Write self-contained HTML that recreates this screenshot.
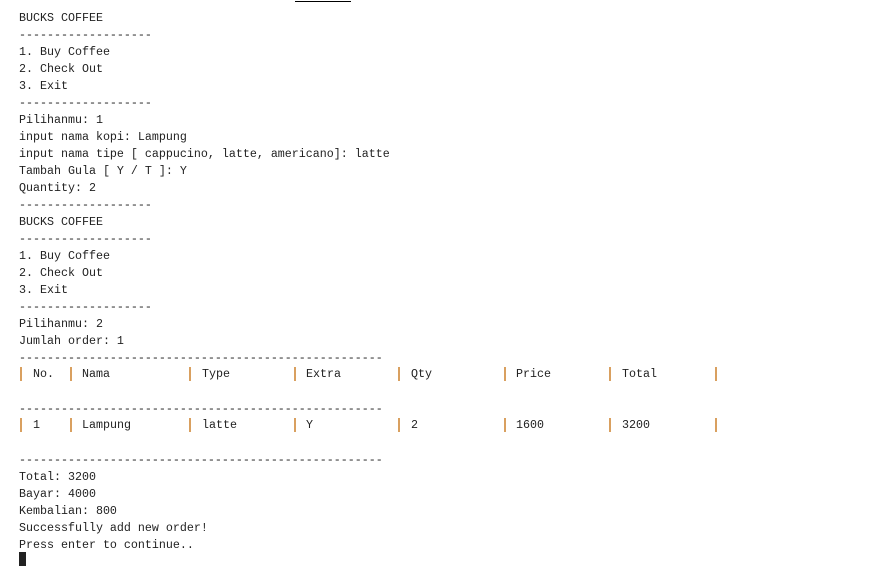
<!DOCTYPE html>
<html><head><style>
body{margin:0;width:883px;height:566px;background:#fff;overflow:hidden;position:relative;font-family:"Liberation Mono",monospace;font-size:11.67px;color:#222;}
pre{margin:0;position:absolute;left:19px;top:10px;font-family:inherit;font-size:inherit;line-height:17px;}
.r{position:absolute;height:17px;line-height:17px;white-space:pre;}
.p{position:absolute;width:2px;height:14px;background:#d9a060;}
.top{position:absolute;left:295px;top:1px;width:56px;height:1px;background:#000;}
.cur{position:absolute;left:19px;top:552px;width:7px;height:14px;background:#222;}
</style></head><body>
<div class="top"></div>
<pre>BUCKS COFFEE
-------------------
1. Buy Coffee
2. Check Out
3. Exit
-------------------
Pilihanmu: 1
input nama kopi: Lampung
input nama tipe [ cappucino, latte, americano]: latte
Tambah Gula [ Y / T ]: Y
Quantity: 2
-------------------
BUCKS COFFEE
-------------------
1. Buy Coffee
2. Check Out
3. Exit
-------------------
Pilihanmu: 2
Jumlah order: 1
----------------------------------------------------


----------------------------------------------------


----------------------------------------------------
Total: 3200
Bayar: 4000
Kembalian: 800
Successfully add new order!
Press enter to continue..</pre>
<div class="p" style="left:20px;top:367px"></div>
<div class="p" style="left:70px;top:367px"></div>
<div class="p" style="left:189px;top:367px"></div>
<div class="p" style="left:294px;top:367px"></div>
<div class="p" style="left:398px;top:367px"></div>
<div class="p" style="left:504px;top:367px"></div>
<div class="p" style="left:609px;top:367px"></div>
<div class="p" style="left:715px;top:367px"></div>
<div class="r" style="left:33px;top:366px">No.</div>
<div class="r" style="left:82px;top:366px">Nama</div>
<div class="r" style="left:202px;top:366px">Type</div>
<div class="r" style="left:306px;top:366px">Extra</div>
<div class="r" style="left:411px;top:366px">Qty</div>
<div class="r" style="left:516px;top:366px">Price</div>
<div class="r" style="left:622px;top:366px">Total</div>
<div class="p" style="left:20px;top:418px"></div>
<div class="p" style="left:70px;top:418px"></div>
<div class="p" style="left:189px;top:418px"></div>
<div class="p" style="left:294px;top:418px"></div>
<div class="p" style="left:398px;top:418px"></div>
<div class="p" style="left:504px;top:418px"></div>
<div class="p" style="left:609px;top:418px"></div>
<div class="p" style="left:715px;top:418px"></div>
<div class="r" style="left:33px;top:417px">1</div>
<div class="r" style="left:82px;top:417px">Lampung</div>
<div class="r" style="left:202px;top:417px">latte</div>
<div class="r" style="left:306px;top:417px">Y</div>
<div class="r" style="left:411px;top:417px">2</div>
<div class="r" style="left:516px;top:417px">1600</div>
<div class="r" style="left:622px;top:417px">3200</div>
<div class="cur"></div>
</body></html>
